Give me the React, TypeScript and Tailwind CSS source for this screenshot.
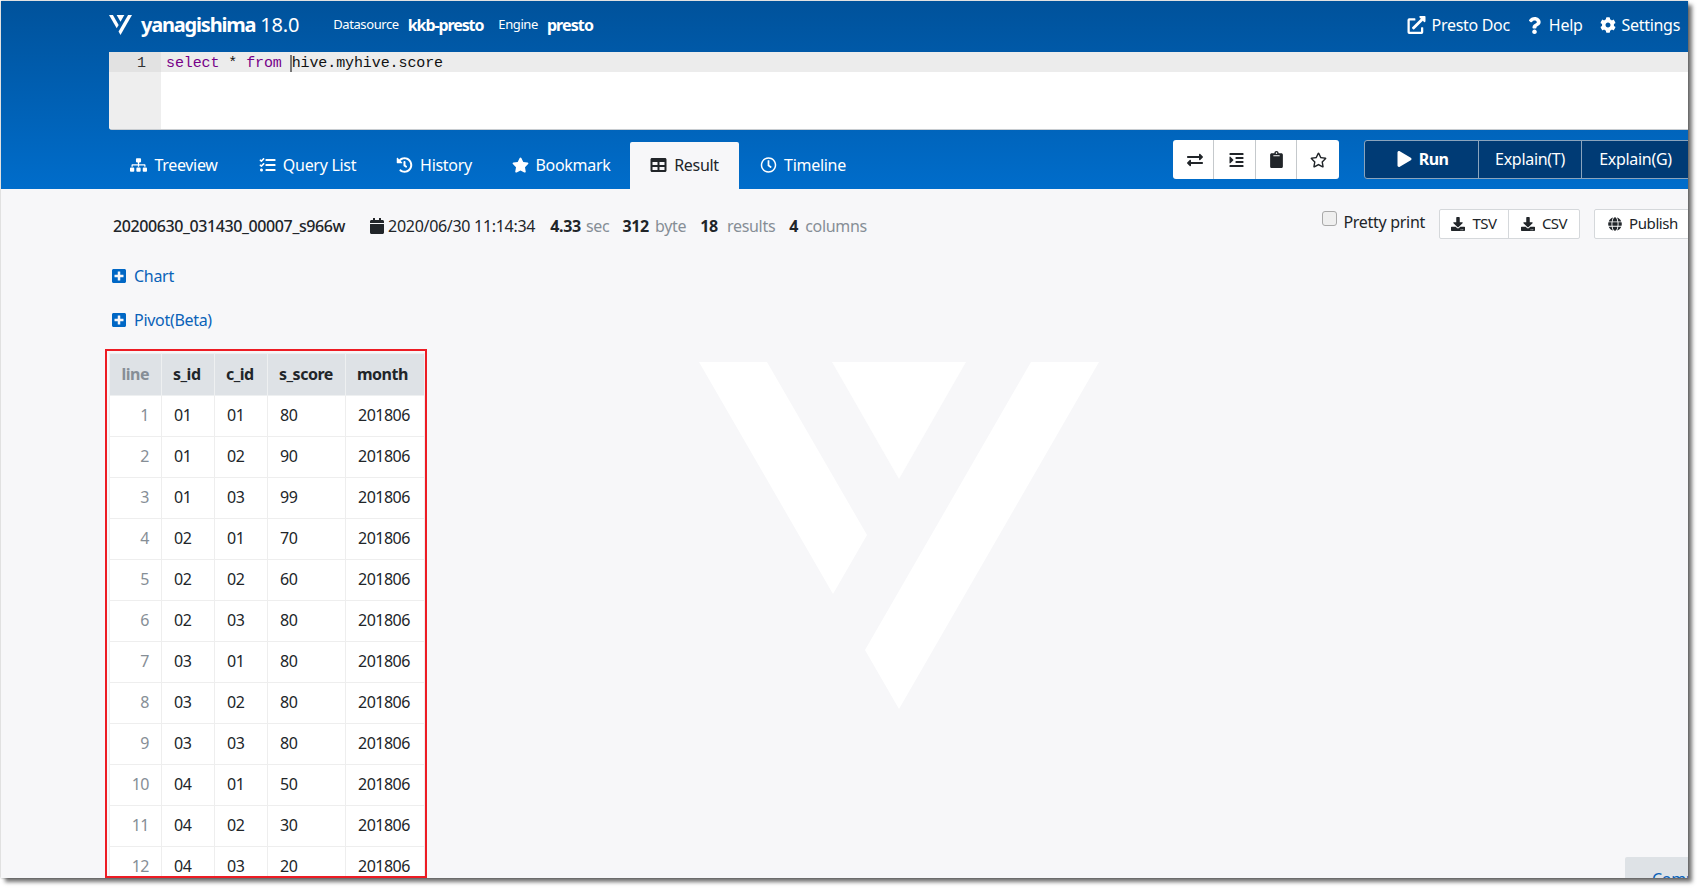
import {
  FaCalendar,
  FaClipboard,
  FaCog,
  FaDownload,
  FaExchangeAlt,
  FaExternalLinkAlt,
  FaGlobe,
  FaHistory,
  FaIndent,
  FaPlay,
  FaPlusSquare,
  FaQuestion,
  FaRegClock,
  FaRegStar,
  FaSitemap,
  FaStar,
  FaTable,
  FaTasks,
} from "react-icons/fa";

const rows = [
  ["1", "01", "01", "80"],
  ["2", "01", "02", "90"],
  ["3", "01", "03", "99"],
  ["4", "02", "01", "70"],
  ["5", "02", "02", "60"],
  ["6", "02", "03", "80"],
  ["7", "03", "01", "80"],
  ["8", "03", "02", "80"],
  ["9", "03", "03", "80"],
  ["10", "04", "01", "50"],
  ["11", "04", "02", "30"],
  ["12", "04", "03", "20"],
];

const tabs = [
  { name: "Treeview", icon: FaSitemap, width: "w-[130px]" },
  { name: "Query List", icon: FaTasks, width: "w-[137px]" },
  { name: "History", icon: FaHistory, width: "w-[116px]" },
  { name: "Bookmark", icon: FaStar, width: "w-[138px]" },
  { name: "Result", icon: FaTable, width: "w-[109px]", active: true },
  { name: "Timeline", icon: FaRegClock, width: "w-[128px]" },
];

function Logo({ className }: { className: string }) {
  return (
    <svg viewBox="0 0 400 347" className={className} fill="currentColor">
      <polygon points="0,0 68,0 168,173 134,232" />
      <polygon points="133,0 267,0 200,117" />
      <polygon points="332,0 400,0 200,347 166,288" />
    </svg>
  );
}

export default function App() {
  return (
    <div className="h-[888px] w-[1697px] bg-white pl-px pt-px font-['Noto_Sans','Open_Sans',sans-serif] text-[16px] tracking-[-0.3px] text-[#212529]">
      <div className="relative flex h-[877px] w-[1687px] flex-col overflow-hidden bg-[#f7f7f9] shadow-[4px_4px_4px_rgba(0,0,0,0.55),0_0_2px_rgba(0,0,0,0.35)]">
        <div className="bg-gradient-to-b from-[#00529b] to-[#006dcb]">
          <header className="flex h-[51px] items-center pb-[3px] pl-[108px] pr-[8px] text-white">
            <Logo className="h-5 w-[23px]" />
            <span className="ml-[9px] text-[20px] font-bold tracking-[-1.2px]">yanagishima</span>
            <span className="ml-[5px] text-[20px] tracking-[-0.2px]">18.0</span>
            <span className="ml-[34px] text-[13px] tracking-[-0.4px]">Datasource</span>
            <span className="ml-[9px] text-[16px] font-bold tracking-[-1.1px]">kkb-presto</span>
            <span className="ml-[15px] text-[13px] tracking-[-0.4px]">Engine</span>
            <span className="ml-[9px] text-[16px] font-bold tracking-[-0.9px]">presto</span>
            <div className="ml-auto flex items-center">
              <FaExternalLinkAlt className="h-[18px] w-[19px]" />
              <span className="ml-[6px]">Presto Doc</span>
              <FaQuestion className="ml-[18px] h-[17px] w-[13px]" />
              <span className="ml-[8px]">Help</span>
              <FaCog className="ml-[17px] h-4 w-4" />
              <span className="ml-[6px]">Settings</span>
            </div>
          </header>
          <div className="ml-[108px] flex h-[78px] rounded-l-[3px] border-b border-b-[#c8ccd0] bg-white font-['Liberation_Mono',monospace] text-[15px] leading-[20px] tracking-[-0.1px]">
            <div className="w-[52px] rounded-l-[3px] bg-[#eeeeee]">
              <div className="h-5 bg-[#e2e2e2] pr-[15px] pt-[2px] text-right text-[#333333]">1</div>
            </div>
            <div className="h-5 flex-1 bg-[#ececec] pl-[5px] pt-[2px] text-[#111111]">
              <span className="text-[#770088]">select</span> * <span className="text-[#770088]">from</span>{" "}
              <span className="ml-[-1px] border-l-2 border-l-[#777777]">hive.myhive.score</span>
            </div>
          </div>
          <div className="flex h-[59px] items-end pl-[108px]">
            {tabs.map((t) => (
              <div
                key={t.name}
                className={`flex h-[47px] items-center justify-center gap-[7px] rounded-t-[2px] pb-[2px] ${t.width} ${
                  t.active ? "bg-[#f7f7f9] text-[#212529]" : "text-white"
                }`}
              >
                <t.icon className="h-4 w-[17px]" />
                <span>{t.name}</span>
              </div>
            ))}
            <div className="mb-[10px] ml-auto flex h-[39px] rounded-[3px] bg-white text-[#212529]">
              <div className="flex w-[41px] items-center justify-center border-r border-r-[#c5c9cc] pl-[3px]">
                <FaExchangeAlt className="h-4 w-4" />
              </div>
              <div className="flex w-[42px] items-center justify-center border-r border-r-[#c5c9cc] pl-[3px]">
                <FaIndent className="h-4 w-[15px]" />
              </div>
              <div className="flex w-[41px] items-center justify-center border-r border-r-[#c5c9cc]">
                <FaClipboard className="h-[17px] w-[13px]" />
              </div>
              <div className="flex w-[42px] items-center justify-center">
                <FaRegStar className="h-4 w-[17px]" />
              </div>
            </div>
            <div className="mb-[10px] ml-[25px] -mr-[2px] flex h-[39px] rounded-l-[3px] border border-[#8aa4bd] bg-[#003b75] text-white">
              <div className="flex w-[114px] items-center justify-center gap-[7px] border-r border-r-[#8aa4bd] pb-px pl-[2px] font-bold">
                <FaPlay className="h-4 w-[15px]" />
                <span className="tracking-[-0.6px]">Run</span>
              </div>
              <div className="flex w-[103px] items-center justify-center border-r border-r-[#8aa4bd] pb-px">Explain(T)</div>
              <div className="flex w-[107px] items-center justify-center pb-px">Explain(G)</div>
            </div>
          </div>
        </div>

        <main className="relative flex-1">
          <Logo className="absolute left-[698px] top-[173px] h-[347px] w-[400px] text-white" />

          <div className="relative flex h-[73px] items-start pl-[112px] pt-[20px]">
            <div className="flex h-[34px] items-center whitespace-nowrap">
              <span className="font-medium tracking-[-0.4px]">20200630_031430_00007_s966w</span>
              <FaCalendar className="ml-[25px] h-4 w-[14px]" />
              <span className="ml-[4px]">2020/06/30 11:14:34</span>
              <b className="ml-[15px] font-bold">4.33</b>
              <span className="ml-[5px] text-[#868e96]">sec</span>
              <b className="ml-[13px] font-bold">312</b>
              <span className="ml-[6px] text-[#868e96]">byte</span>
              <b className="ml-[14px] font-bold">18</b>
              <span className="ml-[9px] text-[#868e96]">results</span>
              <b className="ml-[14px] font-bold">4</b>
              <span className="ml-[7px] text-[#868e96]">columns</span>
            </div>
            <div className="ml-auto -mr-[6px] flex items-start">
              <span className="mt-[2px] h-[15px] w-[15px] rounded-[3px] border border-[#a9a9a9] bg-[#efefef]" />
              <span className="ml-[6px] mt-[3px] leading-[20px]">Pretty print</span>
              <div className="ml-[14px] flex h-[30px] rounded-[2px] border border-[#d5d8db] bg-white text-[15px] tracking-[-0.5px]">
                <div className="flex w-[69px] items-center justify-center gap-[7px] border-r border-r-[#d5d8db] pb-px">
                  <FaDownload className="h-[14px] w-[14px]" />
                  TSV
                </div>
                <div className="flex w-[70px] items-center justify-center gap-[7px] pb-px">
                  <FaDownload className="h-[14px] w-[14px]" />
                  CSV
                </div>
              </div>
              <div className="ml-[14px] flex h-[30px] w-[100px] items-center justify-center gap-[7px] rounded-[2px] border border-[#d5d8db] bg-white pb-px pr-[2px] text-[15px] tracking-[-0.4px]">
                <FaGlobe className="h-[14px] w-[14px]" />
                Publish
              </div>
            </div>
          </div>

          <div className="relative flex h-[28px] items-center gap-[8px] pl-[111px] text-[#0a62b8]">
            <FaPlusSquare className="h-4 w-[14px] text-[#0067c5]" />
            <span>Chart</span>
          </div>
          <div className="relative mt-[16px] flex h-[28px] items-center gap-[8px] pl-[111px] text-[#0a62b8]">
            <FaPlusSquare className="h-4 w-[14px] text-[#0067c5]" />
            <span>Pivot(Beta)</span>
          </div>

          <div className="relative ml-[104px] mt-[15px] h-[529px] w-[322px] overflow-hidden border-2 border-[#ed1c24] pl-[2px] pt-[2px] tracking-[-0.5px]">
            <table className="w-[315px] table-fixed border-collapse bg-white">
              <thead>
                <tr className="h-[42px] bg-[#dee2e6]">
                  <th className="w-[52px] border border-[#eef0f1] pb-[2px] pr-[12px] text-right font-bold text-[#868e96]">line</th>
                  <th className="w-[53px] border border-[#eef0f1] pb-[2px] pl-[11px] text-left font-bold">s_id</th>
                  <th className="w-[53px] border border-[#eef0f1] pb-[2px] pl-[11px] text-left font-bold">c_id</th>
                  <th className="w-[78px] border border-[#eef0f1] pb-[2px] pl-[11px] text-left font-bold">s_score</th>
                  <th className="w-[79px] border border-[#eef0f1] pb-[2px] pl-[11px] text-left font-bold">month</th>
                </tr>
              </thead>
              <tbody>
                {rows.map((r) => (
                  <tr key={r[0]} className="h-[41px]">
                    <td className="border border-[#eeeeee] pb-[2px] pr-[12px] text-right text-[#868e96]">{r[0]}</td>
                    <td className="border border-[#eeeeee] pb-[2px] pl-[12px]">{r[1]}</td>
                    <td className="border border-[#eeeeee] pb-[2px] pl-[12px]">{r[2]}</td>
                    <td className="border border-[#eeeeee] pb-[2px] pl-[12px]">{r[3]}</td>
                    <td className="border border-[#eeeeee] pb-[2px] pl-[12px]">201806</td>
                  </tr>
                ))}
              </tbody>
            </table>
          </div>
        </main>

        <div className="absolute bottom-0 right-0 h-[21px] w-[63px] overflow-hidden rounded-tl-[2px] bg-[#dee2e6] pl-[27px] pt-[12px] leading-[20px] whitespace-nowrap text-[#0a62b8]">
          Comment
        </div>
      </div>
    </div>
  );
}
